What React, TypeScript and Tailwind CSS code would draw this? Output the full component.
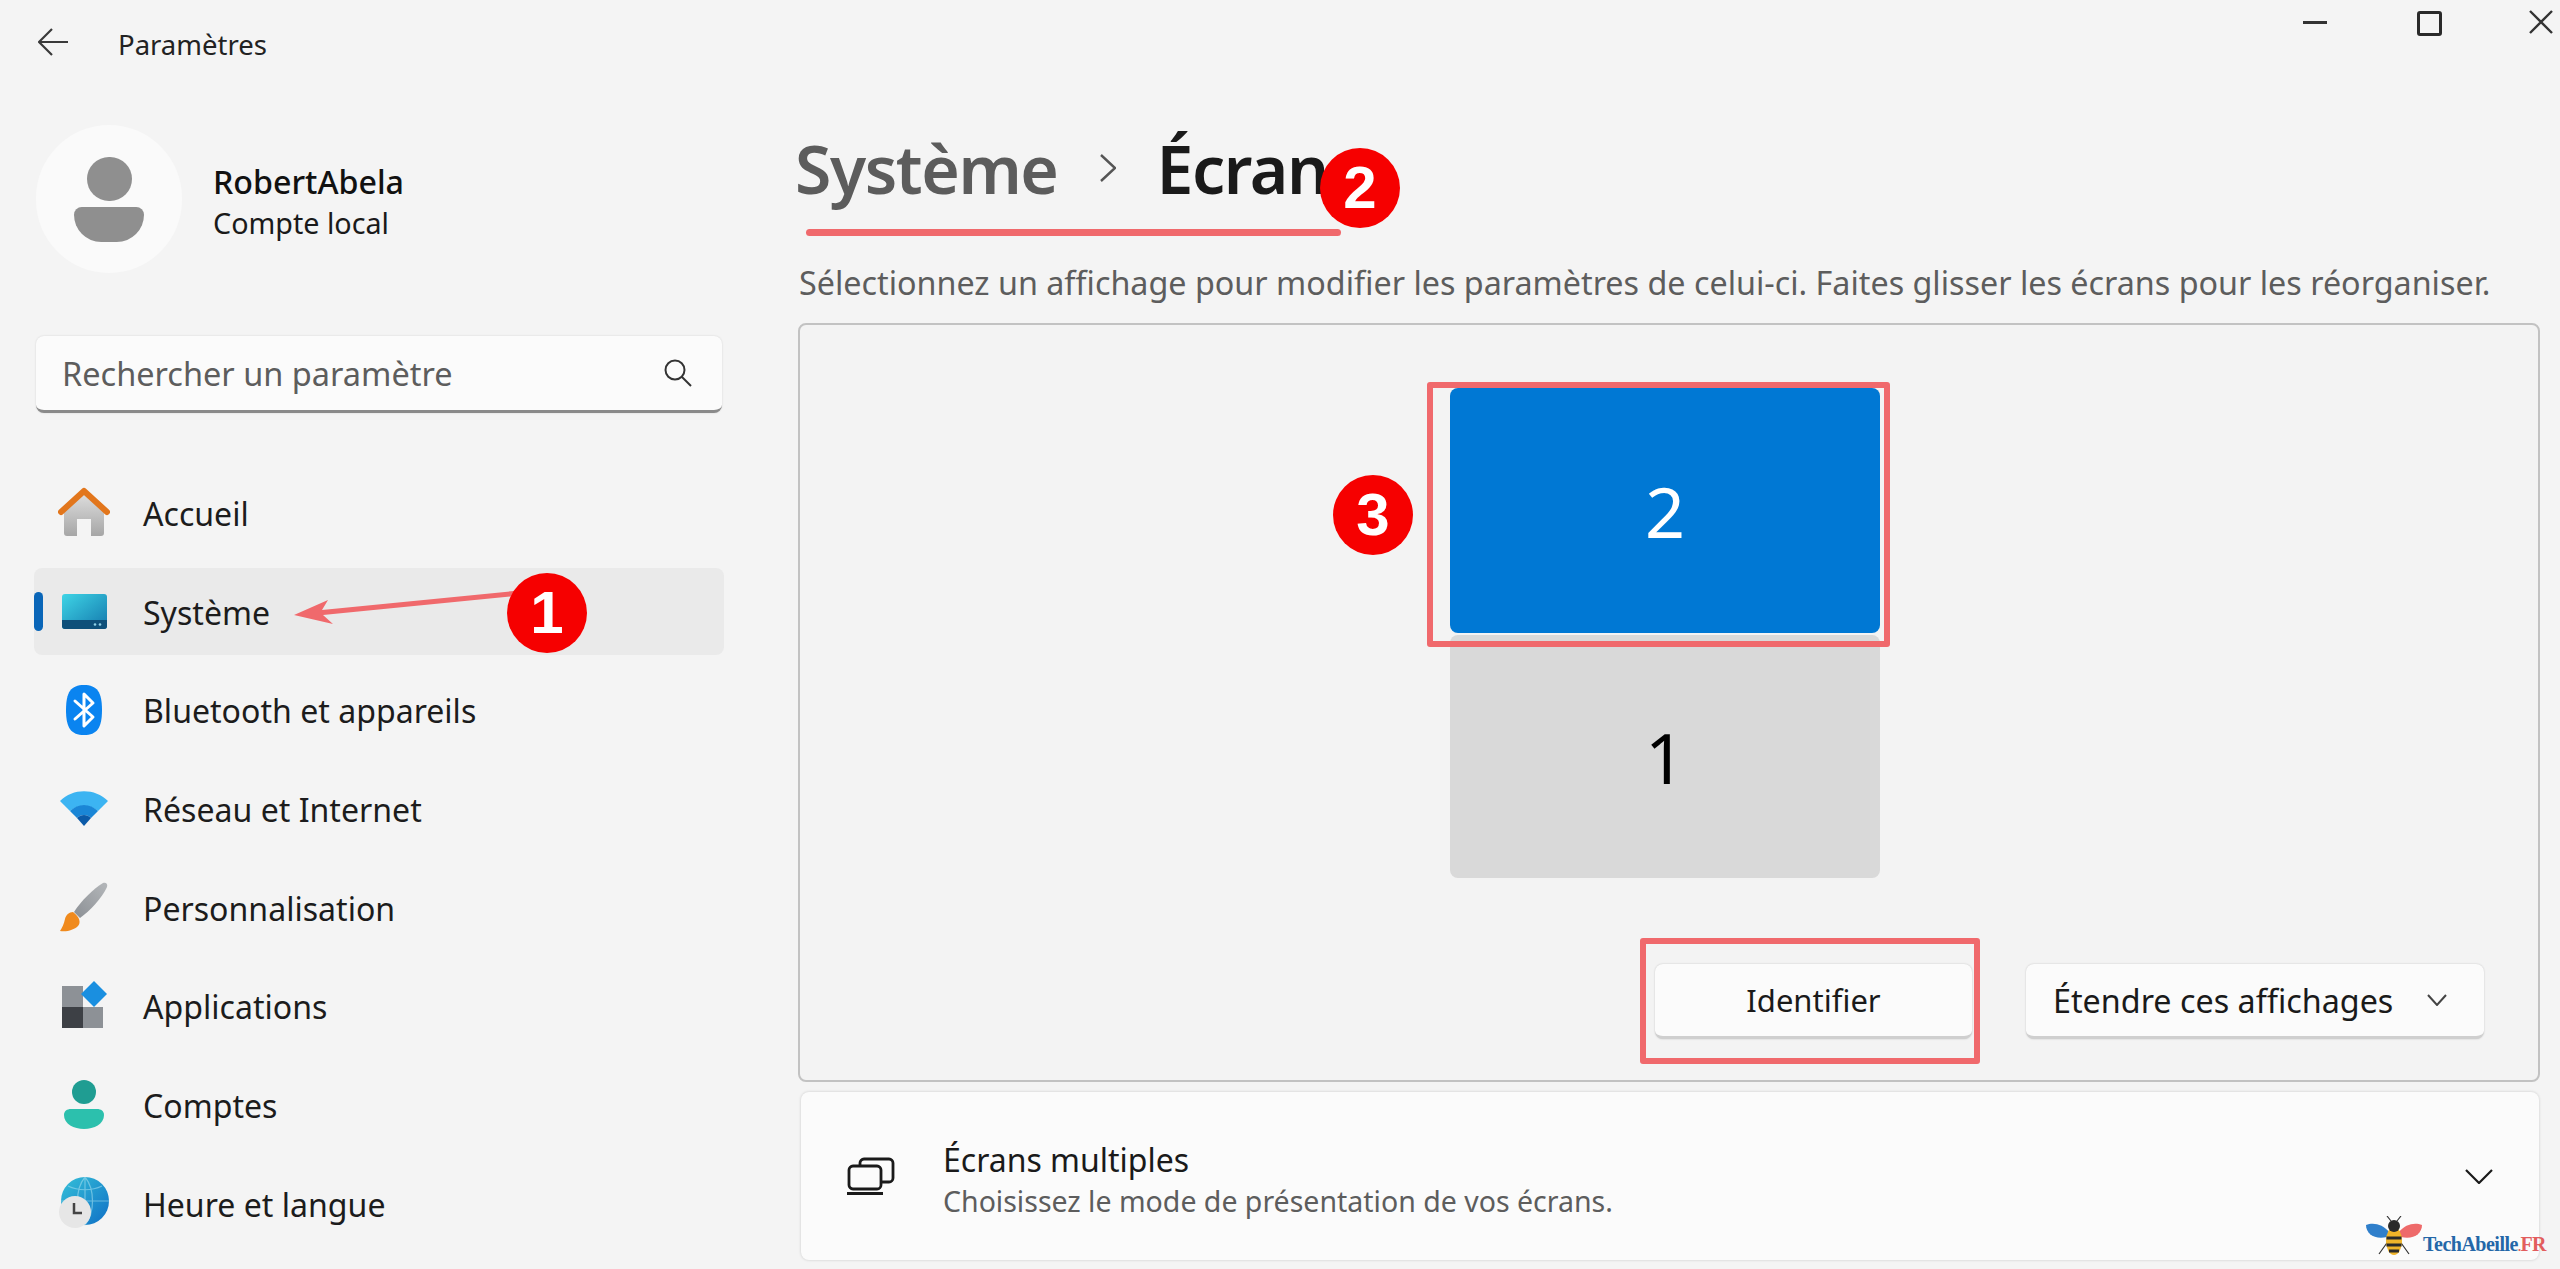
import type { ReactNode } from 'react'

const navItems: { label: string; icon: ReactNode; active?: boolean }[] = [
  { label: 'Accueil', icon: <HomeIcon /> },
  { label: 'Système', icon: <SystemIcon />, active: true },
  { label: 'Bluetooth et appareils', icon: <BluetoothIcon /> },
  { label: 'Réseau et Internet', icon: <WifiIcon /> },
  { label: 'Personnalisation', icon: <BrushIcon /> },
  { label: 'Applications', icon: <AppsIcon /> },
  { label: 'Comptes', icon: <AccountIcon /> },
  { label: 'Heure et langue', icon: <ClockIcon /> },
]

function HomeIcon() {
  return (
    <svg viewBox="0 0 52 52" className="h-[52px] w-[52px]">
      <defs>
        <linearGradient id="homeBody" x1="0" y1="0" x2="0" y2="1">
          <stop offset="0" stopColor="#dedede" />
          <stop offset="1" stopColor="#a6a6a6" />
        </linearGradient>
      </defs>
      <path d="M6 22 26 6l20 16v24a3 3 0 0 1-3 3H33V32H19v17H9a3 3 0 0 1-3-3Z" fill="url(#homeBody)" />
      <path d="M3 25 26 4l23 21" fill="none" stroke="#e2761c" strokeWidth="6" strokeLinecap="round" strokeLinejoin="round" />
    </svg>
  )
}

function SystemIcon() {
  return (
    <svg viewBox="0 0 52 52" className="h-[52px] w-[52px]">
      <defs>
        <linearGradient id="sysBody" x1="0" y1="0" x2="1" y2="1">
          <stop offset="0" stopColor="#3fd5e6" />
          <stop offset="1" stopColor="#1378ad" />
        </linearGradient>
      </defs>
      <rect x="4" y="9" width="45" height="35" rx="3" fill="url(#sysBody)" />
      <path d="M4 35h45v6a3 3 0 0 1-3 3H7a3 3 0 0 1-3-3Z" fill="#0e4f79" />
      <circle cx="37" cy="39.5" r="1.3" fill="#8fd0e6" />
      <circle cx="42" cy="39.5" r="1.3" fill="#8fd0e6" />
    </svg>
  )
}

function BluetoothIcon() {
  return (
    <svg viewBox="0 0 52 52" className="h-[52px] w-[52px]">
      <path d="M26 1c13 0 18 7 18 25s-5 25-18 25S8 44 8 26 13 1 26 1Z" fill="#0a84f0" />
      <path d="M17 17 35 33 26 42V10l9 9-18 16" fill="none" stroke="#fff" strokeWidth="3" strokeLinejoin="round" strokeLinecap="round" />
    </svg>
  )
}

function WifiIcon() {
  return (
    <svg viewBox="0 0 52 52" className="h-[52px] w-[52px]">
      <path d="M2 18C15 5 37 5 50 18L40 28C32 21 20 21 12 28Z" fill="#3cb4f2" />
      <path d="M12 28c8-8 20-8 28 0l-7 7c-4-4-10-4-14 0Z" fill="#1a86d6" />
      <path d="M19 35c4-4 10-4 14 0l-7 8Z" fill="#0b5aa8" />
    </svg>
  )
}

function BrushIcon() {
  return (
    <svg viewBox="0 0 52 52" className="h-[52px] w-[52px]">
      <defs>
        <linearGradient id="brushHandle" x1="0" y1="1" x2="1" y2="0">
          <stop offset="0" stopColor="#8b8f94" />
          <stop offset="1" stopColor="#b4b7ba" />
        </linearGradient>
      </defs>
      <path d="M45 2c3-1 5 1 4 4C44 17 32 30 22 37l-6-6C23 20 35 8 45 2Z" fill="url(#brushHandle)" />
      <path d="M15 31c-4 0-7 3-8 7-1 5-3 9-5 12 7 1 14-1 18-5 3-3 2-9-5-14Z" fill="#f08a1d" />
    </svg>
  )
}

function AppsIcon() {
  return (
    <svg viewBox="0 0 52 52" className="h-[52px] w-[52px]">
      <rect x="4" y="6" width="21" height="21" fill="#8d9196" />
      <rect x="4" y="27" width="21" height="21" fill="#3d4045" />
      <rect x="25" y="27" width="20" height="21" fill="#8d9196" />
      <path d="M36 1l13 13-13 13-13-13Z" fill="#1a8fe0" />
    </svg>
  )
}

function AccountIcon() {
  return (
    <svg viewBox="0 0 52 52" className="h-[52px] w-[52px]">
      <ellipse cx="26" cy="13" rx="12" ry="12" fill="#1f9d92" />
      <path d="M13 30h26c4 0 7 2 7 6 0 9-10 14-20 14S6 45 6 36c0-4 3-6 7-6Z" fill="#2cc0ad" />
    </svg>
  )
}

function ClockIcon() {
  return (
    <svg viewBox="0 0 52 52" className="h-[52px] w-[52px]">
      <defs>
        <linearGradient id="globe" x1="0" y1="0" x2="1" y2="1">
          <stop offset="0" stopColor="#35c0d8" />
          <stop offset="1" stopColor="#0f6fc6" />
        </linearGradient>
      </defs>
      <circle cx="27" cy="24" r="24" fill="url(#globe)" />
      <path d="M27 0v48M3 24h48M10 9c10 5 24 5 34 0M27 0c-10 12-10 36 0 48M27 0c10 12 10 36 0 48" fill="none" stroke="#9fdcef" strokeWidth="1.2" opacity="0.6" />
      <circle cx="17" cy="35" r="16" fill="#e6e6e6" />
      <path d="M16 26v10h8" fill="none" stroke="#444" strokeWidth="2.5" />
    </svg>
  )
}

function NavRow({ label, icon, active }: { label: string; icon: ReactNode; active?: boolean }) {
  return (
    <div className={`flex h-[87px] items-center rounded-lg ${active ? 'bg-[#eaeaea]' : ''}`}>
      <span className={`h-[39px] w-[9px] rounded-full ${active ? 'bg-[#0a66b8]' : ''}`} />
      <span className="ml-[15px] w-[52px]">{icon}</span>
      <span className="ml-[33px] mt-[3px] text-[32.1px] leading-none text-[#1c1c1c]">{label}</span>
    </div>
  )
}

function Badge({ n, className }: { n: number; className: string }) {
  return (
    <div className={`absolute flex h-[80px] w-[80px] items-center justify-center rounded-full bg-[#f60000] font-['Liberation_Sans',sans-serif] text-[60px] font-bold leading-none text-white ${className}`}>
      {n}
    </div>
  )
}

function Bee() {
  return (
    <svg viewBox="0 0 58 40" className="h-[40px] w-[58px]">
      <path d="M24 16C18 8 8 6 1 9c0 9 9 15 21 12Z" fill="#2f7fcb" />
      <path d="M34 16c6-8 16-10 23-7 0 9-9 15-21 12Z" fill="#ee6a6a" />
      <path d="M26 5 22 0M32 5l4-5M24 24 14 38M34 24l10 14" stroke="#333" strokeWidth="1.2" fill="none" />
      <ellipse cx="29" cy="25" rx="8" ry="14" fill="#f0b429" />
      <path d="M21.500 22h15M21.500 29h15M24 35h10" stroke="#2a2a2a" strokeWidth="3" />
      <ellipse cx="29" cy="10" rx="6" ry="6" fill="#2a2a2a" />
    </svg>
  )
}

export default function App() {
  return (
    <div className="relative h-[1269px] w-[2560px] overflow-hidden bg-[#f4f4f4] font-['Noto_Sans',sans-serif]">
      {/* Title bar */}
      <div className="flex h-[90px] items-start pt-[28px]">
        <svg viewBox="0 0 30 28" className="ml-[38px] h-[28px] w-[30px]" fill="none" stroke="#3a3a3a" strokeWidth="2.2">
          <path d="M14 1 1 14l13 13M1 14h29" />
        </svg>
        <span className="ml-[50px] text-[27.500px] leading-[34px] text-[#222]">Paramètres</span>
      </div>
      <div className="absolute right-[7px] top-[10px] flex items-start">
        <span className="mt-[11px] h-[3px] w-[24px] bg-[#333]" />
        <span className="ml-[90px] mt-[1px] h-[25px] w-[25px] rounded-[3px] border-[3px] border-[#2a2a2a]" />
        <svg viewBox="0 0 24 24" className="ml-[87px] h-[24px] w-[24px]" fill="none" stroke="#333" strokeWidth="2.4">
          <path d="M1 1l22 22M23 1 1 23" />
        </svg>
      </div>

      <div className="flex">
        {/* Sidebar */}
        <aside className="ml-[34px] w-[690px] shrink-0">
          <div className="mt-[35px] flex items-center pl-[2px]">
            <div className="flex h-[148px] w-[146px] flex-col items-center justify-center rounded-full bg-[#fafafa]">
              <span className="h-[44px] w-[45px] rounded-full bg-[#8f8f8f]" />
              <span className="mt-[6px] h-[35px] w-[70px] rounded-b-[35px] rounded-t-[10px] bg-[#8f8f8f]" />
            </div>
            <div className="ml-[31px] mt-[8px]">
              <div className="text-[32.2px] font-medium leading-[40px] text-[#111]">RobertAbela</div>
              <div className="text-[28.7px] leading-[42px] text-[#1a1a1a]">Compte local</div>
            </div>
          </div>

          <div className="ml-[2px] mt-[63px] flex h-[77px] w-[686px] items-center justify-between rounded-lg border-b-[3px] border-b-[#8a8a8a] bg-[#fbfbfb] pl-[26px] pr-[30px] shadow-[0_0_2px_rgba(0,0,0,0.15)]">
            <span className="mt-[2px] text-[32.5px] leading-none text-[#5d5d5d]">Rechercher un paramètre</span>
            <svg viewBox="0 0 28 28" className="h-[28px] w-[28px]" fill="none" stroke="#333" strokeWidth="2">
              <circle cx="11" cy="11" r="9.500" />
              <path d="m18 18 9 9" />
            </svg>
          </div>

          <nav className="mt-[56px] flex flex-col gap-[11.7px]">
            {navItems.map((item) => (
              <NavRow key={item.label} {...item} />
            ))}
          </nav>
        </aside>

        {/* Main */}
        <main className="ml-[74px] w-[1742px] shrink-0">
          <div className="mt-[33px] flex h-[90px] items-center text-[66px] font-semibold leading-none tracking-[-1.4px]">
            <span className="-ml-[3px] text-[#5c5c5c]">Système</span>
            <svg viewBox="0 0 16 28" className="ml-[42px] h-[28px] w-[16px]" fill="none" stroke="#555" strokeWidth="2.4">
              <path d="m1 1 14 13L1 27" />
            </svg>
            <span className="ml-[41px] text-[#1a1a1a]">Écran</span>
          </div>
          <p className="ml-[1px] mt-[47px] whitespace-nowrap text-[32.3px] leading-[44px] text-[#5d5d5d]">
            Sélectionnez un affichage pour modifier les paramètres de celui-ci. Faites glisser les écrans pour les réorganiser.
          </p>

          {/* Display arrangement */}
          <section className="mt-[19px] flex h-[759px] flex-col rounded-lg border-2 border-[#c2c2c2] bg-[#f3f3f3]">
            <div className="ml-[650px] mt-[63px] flex w-[430px] flex-col gap-[2px]">
              <div className="flex h-[245px] items-center justify-center rounded-lg bg-[#0078d4] text-[70px] leading-none text-white">2</div>
              <div className="flex h-[243px] items-center justify-center rounded-lg bg-[#d9d9d9] text-[70px] leading-none text-black">1</div>
            </div>
            <div className="mr-[54px] mt-[86px] flex justify-end gap-[54px] text-[32.3px] text-[#1a1a1a]">
              <div className="flex h-[75px] w-[317px] items-center justify-center rounded-lg border-b-[3px] border-b-[#cfcfcf] bg-[#fbfbfb] text-[31px] shadow-[0_0_2px_rgba(0,0,0,0.2)]">
                Identifier
              </div>
              <div className="flex h-[75px] w-[458px] items-center justify-between rounded-lg border-b-[3px] border-b-[#cfcfcf] bg-[#fbfbfb] pl-[27px] pr-[37px] shadow-[0_0_2px_rgba(0,0,0,0.2)]">
                Étendre ces affichages
                <svg viewBox="0 0 20 12" className="h-[12px] w-[20px]" fill="none" stroke="#444" strokeWidth="2">
                  <path d="m1 1 9 10 9-10" />
                </svg>
              </div>
            </div>
          </section>

          {/* Multiple displays */}
          <section className="ml-[3px] mt-[10px] flex h-[168px] w-[1738px] items-center rounded-lg bg-[#fbfbfb] shadow-[0_0_3px_rgba(0,0,0,0.18)]">
            <svg viewBox="0 0 50 38" className="ml-[45px] h-[38px] w-[50px]" fill="none" stroke="#1a1a1a" strokeWidth="2.8">
              <rect x="3" y="9" width="32" height="23" rx="4" />
              <path d="M14 9V6a4 4 0 0 1 4-4h25a4 4 0 0 1 4 4v15a4 4 0 0 1-4 4h-8M1 36.500h36" />
            </svg>
            <div className="ml-[47px] mt-[5px]">
              <div className="text-[32px] leading-[44px] text-[#1a1a1a]">Écrans multiples</div>
              <div className="text-[28.500px] leading-[38px] text-[#5d5d5d]">Choisissez le mode de présentation de vos écrans.</div>
            </div>
            <svg viewBox="0 0 28 15" className="ml-auto mr-[46px] h-[15px] w-[28px]" fill="none" stroke="#1a1a1a" strokeWidth="2.2">
              <path d="m1 1 13 13L27 1" />
            </svg>
          </section>
        </main>
      </div>

      {/* Annotations */}
      <span className="absolute left-[806px] top-[229px] h-[7px] w-[535px] rounded-full bg-[#f0696c]" />
      <div className="absolute left-[1427px] top-[382px] h-[265px] w-[463px] rounded-[3px] border-[6px] border-[#f0696c]" />
      <div className="absolute left-[1640px] top-[938px] h-[126px] w-[340px] rounded-[3px] border-[6px] border-[#f0696c]" />
      <svg viewBox="0 0 230 40" className="absolute left-[292px] top-[585px] h-[40px] w-[230px]">
        <path d="M2 30 36 15 30 25 222 6l1 5L31 30l10 9Z" fill="#f0696c" />
      </svg>
      <Badge n={1} className="left-[507px] top-[573px]" />
      <Badge n={2} className="left-[1320px] top-[148px]" />
      <Badge n={3} className="left-[1333px] top-[475px]" />

      {/* Watermark */}
      <div className="absolute left-[2365px] top-[1216px] flex items-end">
        <Bee />
        <span className="mb-[2px] whitespace-nowrap font-['Liberation_Serif',serif] text-[20px] font-bold leading-none tracking-[-0.5px] text-[#2467a8]">
          TechAbeille<span className="text-[12px] text-[#e25d5d]">.</span><span className="text-[#e25d5d]">FR</span>
        </span>
      </div>
    </div>
  )
}
